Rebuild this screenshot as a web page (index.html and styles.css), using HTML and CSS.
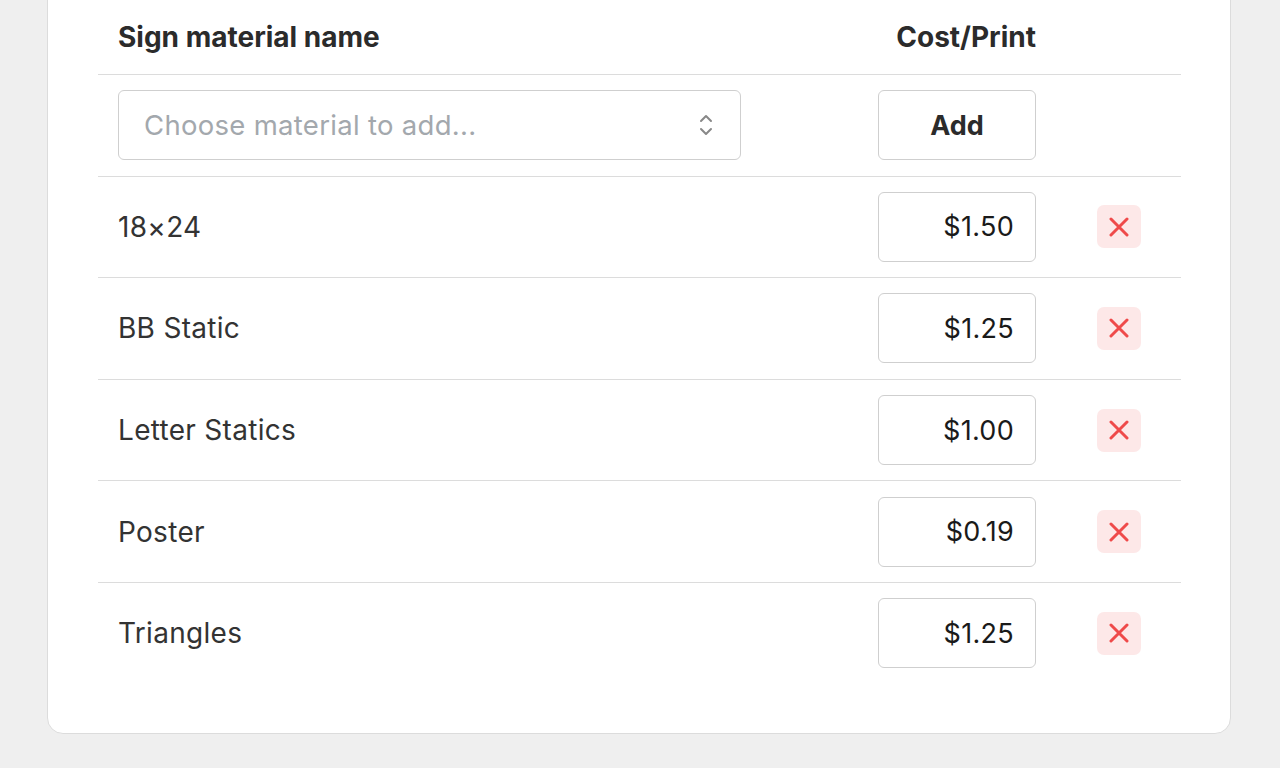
FILE: index.html
```html
<!DOCTYPE html>
<html lang="en">

<head>
    <meta charset="UTF-8">
    <meta name="viewport" content="width=device-width, initial-scale=1.0">
    <title>Sign materials</title>
    <link rel="stylesheet" href="styles.css">
</head>

<body>

    <div class="card">

        <div class="row head">
            <div class="name">Sign material name</div>
            <div class="cost">Cost/Print</div>
            <div></div>
        </div>

        <div class="row">
            <div class="name">
                <div class="select">
                    <span>Choose material to add...</span>
                    <svg width="16" height="24" viewBox="0 0 16 24" fill="none" stroke="#888" stroke-width="2" stroke-linecap="round" stroke-linejoin="round">
                        <path d="M3 8l5-5 5 5" />
                        <path d="M3 16l5 5 5-5" />
                    </svg>
                </div>
            </div>
            <div class="cost"><button class="add">Add</button></div>
            <div></div>
        </div>

        <div class="row">
            <div class="name">18×24</div>
            <div class="cost"><div class="price">$1.50</div></div>
            <div class="action"><button class="delete"><svg width="20" height="20" viewBox="0 0 20 20"><path d="M2 2l16 16M18 2L2 18" /></svg></button></div>
        </div>

        <div class="row">
            <div class="name">BB Static</div>
            <div class="cost"><div class="price">$1.25</div></div>
            <div class="action"><button class="delete"><svg width="20" height="20" viewBox="0 0 20 20"><path d="M2 2l16 16M18 2L2 18" /></svg></button></div>
        </div>

        <div class="row">
            <div class="name">Letter Statics</div>
            <div class="cost"><div class="price">$1.00</div></div>
            <div class="action"><button class="delete"><svg width="20" height="20" viewBox="0 0 20 20"><path d="M2 2l16 16M18 2L2 18" /></svg></button></div>
        </div>

        <div class="row">
            <div class="name">Poster</div>
            <div class="cost"><div class="price">$0.19</div></div>
            <div class="action"><button class="delete"><svg width="20" height="20" viewBox="0 0 20 20"><path d="M2 2l16 16M18 2L2 18" /></svg></button></div>
        </div>

        <div class="row">
            <div class="name">Triangles</div>
            <div class="cost"><div class="price">$1.25</div></div>
            <div class="action"><button class="delete"><svg width="20" height="20" viewBox="0 0 20 20"><path d="M2 2l16 16M18 2L2 18" /></svg></button></div>
        </div>

    </div>

</body>

</html>
```

FILE: styles.css
```css
body {
    margin: 0;
    background-color: #efefef;
    font-family: Inter, "Noto Sans", sans-serif;
    color: #333;
}

.card {
    width: 1083px;
    margin: -51px 0 0 47px;
    padding: 50px 49px 49px 50px;
    background-color: white;
    border: 1px solid #dcdcdc;
    border-radius: 16px;
}

.row {
    display: grid;
    grid-template-columns: 663px 295px 125px;
    align-items: center;
    padding: 15.3px 0;
    border-bottom: 1px solid #dcdcdc;
    font-size: 28px;
    letter-spacing: 0.3px;
}

.row:last-child {
    border-bottom: none;
}

.row.head {
    padding: 20px 0;
    font-weight: 700;
    line-height: 34px;
    letter-spacing: 0;
    color: #2b2b2b;
}

.name {
    padding: 0 20px;
}

.cost {
    padding: 0 20px;
    display: flex;
    justify-content: flex-end;
}

.action {
    display: flex;
    justify-content: center;
}

.select {
    height: 68px;
    border: 1px solid #cfcfcf;
    border-radius: 6px;
    display: flex;
    align-items: center;
    justify-content: space-between;
    padding: 0 26px 0 25px;
    color: #a3a8ad;
    font-size: 27.5px;
}

.add,
.price {
    width: 158px;
    height: 70px;
    box-sizing: border-box;
    border: 1px solid #cfcfcf;
    border-radius: 6px;
    background-color: white;
    font-family: inherit;
    font-size: 27px;
    color: #2b2b2b;
}

.add {
    font-weight: 700;
}

.price {
    display: flex;
    align-items: center;
    justify-content: flex-end;
    padding-right: 21px;
    color: #1a1a1a;
}

.delete {
    width: 44px;
    height: 43px;
    border: none;
    border-radius: 7px;
    background-color: #fde8e8;
    display: flex;
    align-items: center;
    justify-content: center;
    padding: 0;
}

.delete path {
    stroke: #ef4a4a;
    stroke-width: 3;
    stroke-linecap: round;
}
```
